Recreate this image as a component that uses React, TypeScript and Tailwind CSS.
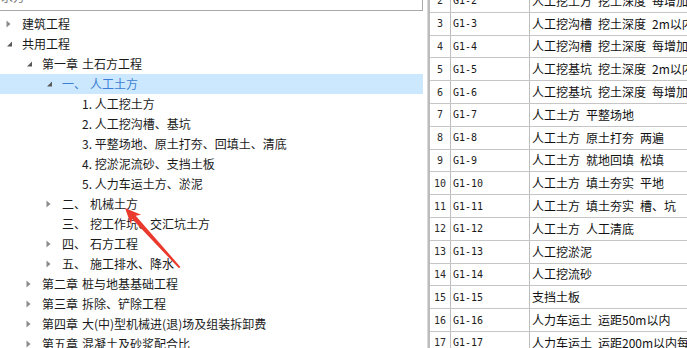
import React from "react";

type Node = { l: number; t: "c" | "e" | "n"; text: string; sel?: boolean };

const SP = "\u2004";

const tree: Node[] = [
  { l: 0, t: "c", text: "建筑工程" },
  { l: 0, t: "e", text: "共用工程" },
  { l: 1, t: "e", text: `第一章${SP}土石方工程` },
  { l: 2, t: "e", text: `一、${SP}人工土方`, sel: true },
  { l: 3, t: "n", text: "1. 人工挖土方" },
  { l: 3, t: "n", text: "2. 人工挖沟槽、基坑" },
  { l: 3, t: "n", text: "3. 平整场地、原土打夯、回填土、清底" },
  { l: 3, t: "n", text: "4. 挖淤泥流砂、支挡土板" },
  { l: 3, t: "n", text: "5. 人力车运土方、淤泥" },
  { l: 2, t: "c", text: `二、${SP}机械土方` },
  { l: 2, t: "n", text: `三、${SP}挖工作坑、交汇坑土方` },
  { l: 2, t: "c", text: `四、${SP}石方工程` },
  { l: 2, t: "c", text: `五、${SP}施工排水、降水` },
  { l: 1, t: "c", text: `第二章${SP}桩与地基基础工程` },
  { l: 1, t: "c", text: `第三章${SP}拆除、铲除工程` },
  { l: 1, t: "c", text: `第四章${SP}大(中)型机械进(退)场及组装拆卸费` },
  { l: 1, t: "c", text: `第五章${SP}混凝土及砂浆配合比` },
];

const E = "\u2002";
const rows: [number, string][] = [
  [2, `人工挖土方${E}挖土深度${E}每增加1m`],
  [3, `人工挖沟槽${E}挖土深度${E}2m以内`],
  [4, `人工挖沟槽${E}挖土深度${E}每增加1m`],
  [5, `人工挖基坑${E}挖土深度${E}2m以内`],
  [6, `人工挖基坑${E}挖土深度${E}每增加1m`],
  [7, `人工土方${E}平整场地`],
  [8, `人工土方${E}原土打夯${E}两遍`],
  [9, `人工土方${E}就地回填${E}松填`],
  [10, `人工土方${E}填土夯实${E}平地`],
  [11, `人工土方${E}填土夯实${E}槽、坑`],
  [12, `人工土方${E}人工清底`],
  [13, "人工挖淤泥"],
  [14, "人工挖流砂"],
  [15, "支挡土板"],
  [16, `人力车运土${E}运距50m以内`],
  [17, `人力车运土${E}运距200m以内每增加50m`],
];

const indent: Record<number, string> = {
  0: "pl-[2px]",
  1: "pl-[22px]",
  2: "pl-[42px]",
  3: "pl-[62px]",
};

function Tri({ t }: { t: Node["t"] }) {
  return (
    <svg width="20" height="20" viewBox="0 0 20 20" className="shrink-0">
      {t === "c" && <polygon points="4.5,6.5 8.5,10 4.5,13.5" fill="#8c8c8c" />}
      {t === "e" && <polygon points="10,7.5 10,12.5 5,12.5" fill="#595959" />}
    </svg>
  );
}

const mono = { fontFamily: '"DejaVu Sans Mono", monospace' };

export default function App() {
  return (
    <div
      className="relative flex w-[687px] h-[348px] overflow-hidden bg-white text-[12px]"
      style={{ fontFamily: '"Noto Sans CJK SC", "Noto Sans", sans-serif' }}
    >
      {/* Left tree panel */}
      <div className="flex flex-col w-[423px] shrink-0">
        <div className="h-[11px] shrink-0 w-[423px] border-r border-b border-[#a9a9a9] overflow-hidden">
          <div className="-mt-[9px] leading-[12px] pl-[1px] text-[#777]">求方</div>
        </div>
        <div className="pt-[3px] flex flex-col shrink-0">
          {tree.map((n, i) => (
            <div
              key={i}
              className={`flex shrink-0 items-center h-[20px] whitespace-nowrap ${indent[n.l]} ${
                n.sel ? "bg-[#cce8ff] text-[#3b7fd4]" : "text-[#1a1a1a]"
              }`}
            >
              <Tri t={n.t} />
              <span className="leading-[20px]">{n.text}</span>
            </div>
          ))}
        </div>
      </div>

      {/* spacer + divider */}
      <div className="w-[4px] shrink-0" />
      <div className="w-[1px] shrink-0 bg-[#dadada]" />

      {/* Table */}
      <div className="flex-1 min-w-0 -mt-[10px] border-l-2 border-[#bcbcbc]">
        {rows.map(([n, name]) => (
          <div key={n} className="flex shrink-0 h-[22.8px] border-b border-[#c6c6c6] whitespace-nowrap">
            <div
              className="w-[21px] shrink-0 border-r border-[#bdbdbd] flex items-center justify-center text-[#2a2a2a] text-[10px]"
              style={mono}
            >
              {n}
            </div>
            <div
              className="w-[79px] shrink-0 border-r border-[#bdbdbd] flex items-center pl-[2px] text-[#1a1a1a] text-[10px]"
              style={mono}
            >
              G1-{n}
            </div>
            <div className="flex items-center pl-[2px] text-[#111]">{name}</div>
          </div>
        ))}
      </div>

      {/* Red annotation arrow */}
      <svg
        className="absolute left-0 top-0 pointer-events-none"
        width="687"
        height="348"
        viewBox="0 0 687 348"
      >
        <polygon
          points="125,208 141.1,214.8 135.7,215.7 180.4,266.9 179,268.3 132.1,219.1 130.9,224.4"
          fill="#ea3a2e"
        />
      </svg>
    </div>
  );
}
